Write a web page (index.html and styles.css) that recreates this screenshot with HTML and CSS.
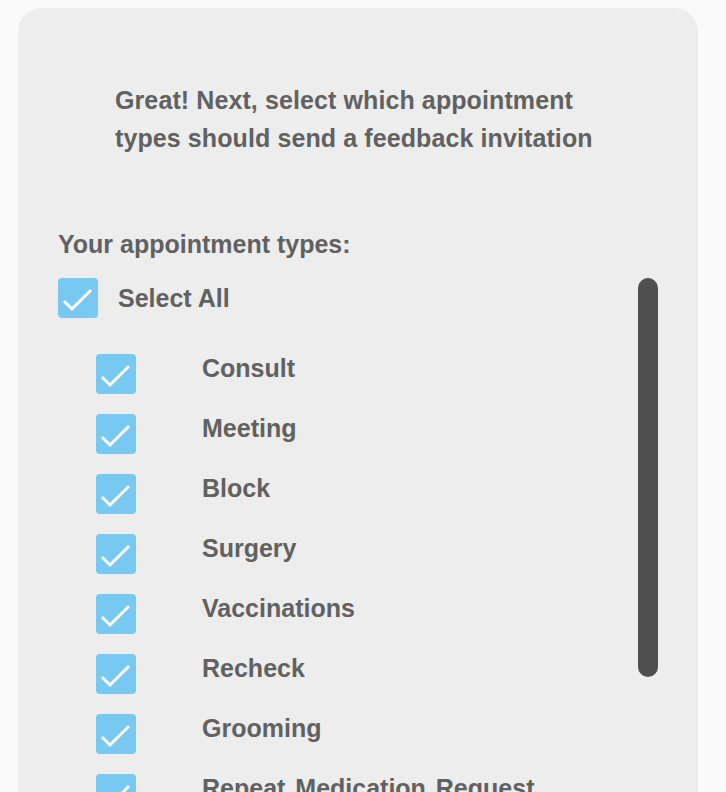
FILE: index.html
```html
<!DOCTYPE html>
<html lang="en">
<head>
<meta charset="utf-8">
<title>Appointment types</title>
<link rel="stylesheet" href="styles.css">
</head>
<body>
<div class="card">
  <p class="intro">Great! Next, select which appointment types should send a feedback invitation</p>
  <div class="types-label">Your appointment types:</div>
  <div class="picker">
    <div class="list">
      <label class="row all">
        <span class="box"><svg viewBox="0 0 40 40"><path d="M7 24 L14 31 L32 13"/></svg></span>
        <span class="name">Select All</span>
      </label>
      <div class="items">
        <label class="row item"><span class="box"><svg viewBox="0 0 40 40"><path d="M7 24 L14 31 L32 13"/></svg></span><span class="name">Consult</span></label>
        <label class="row item"><span class="box"><svg viewBox="0 0 40 40"><path d="M7 24 L14 31 L32 13"/></svg></span><span class="name">Meeting</span></label>
        <label class="row item"><span class="box"><svg viewBox="0 0 40 40"><path d="M7 24 L14 31 L32 13"/></svg></span><span class="name">Block</span></label>
        <label class="row item"><span class="box"><svg viewBox="0 0 40 40"><path d="M7 24 L14 31 L32 13"/></svg></span><span class="name">Surgery</span></label>
        <label class="row item"><span class="box"><svg viewBox="0 0 40 40"><path d="M7 24 L14 31 L32 13"/></svg></span><span class="name">Vaccinations</span></label>
        <label class="row item"><span class="box"><svg viewBox="0 0 40 40"><path d="M7 24 L14 31 L32 13"/></svg></span><span class="name">Recheck</span></label>
        <label class="row item"><span class="box"><svg viewBox="0 0 40 40"><path d="M7 24 L14 31 L32 13"/></svg></span><span class="name">Grooming</span></label>
        <label class="row item"><span class="box"><svg viewBox="0 0 40 40"><path d="M7 24 L14 31 L32 13"/></svg></span><span class="name">Repeat Medication Request</span></label>
        <label class="row item"><span class="box"><svg viewBox="0 0 40 40"><path d="M7 24 L14 31 L32 13"/></svg></span><span class="name">Dental</span></label>
      </div>
    </div>
    <div class="scrollbar"></div>
  </div>
</div>
</body>
</html>
```
FILE: styles.css
```css
html, body {
  margin: 0;
  padding: 0;
  background: #fafafa;
  overflow: hidden;
}
body {
  font-family: "Liberation Sans", Arial, sans-serif;
  color: #616161;
}
.card {
  margin: 8px 0 0 18px;
  width: 680px;
  min-height: 900px;
  box-sizing: border-box;
  background: #ededed;
  border-radius: 24px;
  padding: 73px 40px 40px 40px;
}
.intro {
  margin: 0;
  padding: 0 40px 0 57px;
  font-size: 25px;
  line-height: 38px;
  font-weight: bold;
  letter-spacing: 0.1px;
}
.types-label {
  margin-top: 72px;
  font-size: 25px;
  line-height: 30px;
  font-weight: bold;
}
.picker {
  display: flex;
  margin-top: 19px;
}
.list {
  flex: 1;
}
.scrollbar {
  width: 20px;
  height: 399px;
  border-radius: 10px;
  background: #505050;
  flex: none;
}
.row {
  display: flex;
  align-items: center;
  height: 40px;
}
.box {
  width: 40px;
  height: 40px;
  border-radius: 4px;
  background: #78c9f2;
  flex: none;
  display: block;
}
.box svg {
  display: block;
  width: 40px;
  height: 40px;
}
.box path {
  fill: none;
  stroke: #ffffff;
  stroke-width: 3;
  stroke-linecap: square;
  stroke-linejoin: miter;
}
.name {
  font-size: 25px;
  line-height: 30px;
  font-weight: bold;
}
.all .name {
  margin-left: 20px;
}
.items {
  margin-top: 36px;
  padding-left: 38px;
  display: flex;
  flex-direction: column;
  gap: 20px;
}
.item .name {
  margin-left: 66px;
  padding-bottom: 13px;
  word-spacing: 3px;
}
```
